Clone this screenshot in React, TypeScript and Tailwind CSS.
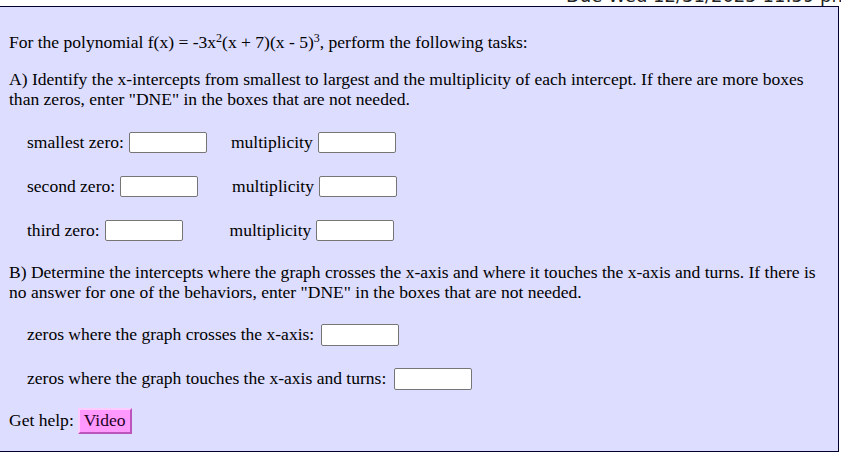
export default function App() {
  const box = "inline-block h-[21px] w-[78px] rounded-[2px] border border-[#767676] bg-white";
  return (
    <div className="relative h-[454px] w-[841px] overflow-hidden bg-white">
      {/* clipped due date header */}
      <div className="h-[6px] overflow-hidden">
        <div className="-mt-[15px] ml-[566px] whitespace-nowrap font-['DejaVu_Sans',sans-serif] text-[18px] leading-[21px] text-[#222]">
          Due Wed 12/31/2025 11:59 pm
        </div>
      </div>

      {/* problem panel */}
      <div className="-ml-px flex h-[446px] w-[840px] flex-col border border-[#00002a] bg-[#ddddff] pl-[9px] pr-[8px] font-['Liberation_Serif','Times_New_Roman',serif] text-[17.55px] leading-[20.5px] text-black">
        <p className="mt-[25px]">
          For the polynomial f(x) = -3x<sup className="text-[12px] leading-none">2</sup>(x + 7)(x - 5)
          <sup className="text-[12px] leading-none">3</sup>, perform the following tasks:
        </p>

        <p className="mt-[16px]">
          A) Identify the x-intercepts from smallest to largest and the multiplicity of each intercept. If there are more boxes
          than zeros, enter "DNE" in the boxes that are not needed.
        </p>

        <div className="mt-[22px] flex h-[21px] items-center pl-[18px]">
          <span>smallest zero:</span>
          <span className={`${box} ml-[5px]`} />
          <span className="ml-[24px]">multiplicity</span>
          <span className={`${box} ml-[5px] w-[77px]`} />
        </div>

        <div className="mt-[23px] flex h-[21px] items-center pl-[18px]">
          <span>second zero:</span>
          <span className={`${box} ml-[5px]`} />
          <span className="ml-[34px]">multiplicity</span>
          <span className={`${box} ml-[5px] w-[77px]`} />
        </div>

        <div className="mt-[23px] flex h-[21px] items-center pl-[18px]">
          <span>third zero:</span>
          <span className={`${box} ml-[5px]`} />
          <span className="ml-[47px]">multiplicity</span>
          <span className={`${box} ml-[5px] w-[77px]`} />
        </div>

        <p className="mt-[21px]">
          B) Determine the intercepts where the graph crosses the x-axis and where it touches the x-axis and turns. If there is
          no answer for one of the behaviors, enter "DNE" in the boxes that are not needed.
        </p>

        <div className="mt-[21px] flex h-[22px] items-center pl-[18px]">
          <span>zeros where the graph crosses the x-axis:</span>
          <span className={`${box} ml-[7px] h-[22px] w-[77px]`} />
        </div>

        <div className="mt-[22px] flex h-[22px] items-center pl-[18px]">
          <span>zeros where the graph touches the x-axis and turns:</span>
          <span className={`${box} ml-[8px] h-[22px] w-[77px]`} />
        </div>

        <div className="mt-[18px] flex h-[26px] items-center">
          <span>Get help:</span>
          <span className="ml-[4px] flex h-[26px] items-center border-2 border-t-[#ffccff] border-l-[#ffccff] border-r-[#bb55bb] border-b-[#bb55bb] bg-[#ff99ff] px-[4px] text-[#220022]">
            Video
          </span>
        </div>
      </div>
    </div>
  );
}
